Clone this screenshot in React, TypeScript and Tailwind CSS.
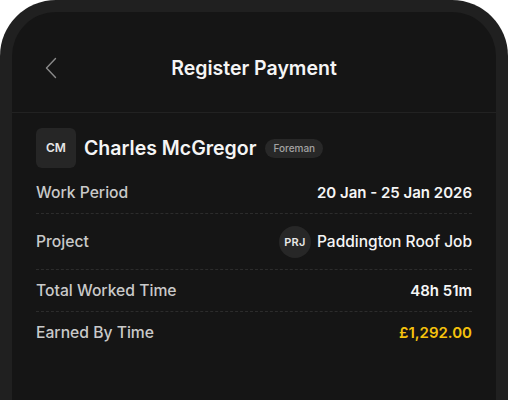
import React from 'react';

interface Row {
  label: string;
  value: React.ReactNode;
  last?: boolean;
}

function BackIcon() {
  return (
    <svg width="12" height="22" viewBox="0 0 12 22" fill="none" className="text-[#8a8a8a]">
      <path d="M10.5 1.5 L1.5 11 L10.5 20.5" stroke="currentColor" strokeWidth="1.4" strokeLinecap="round" strokeLinejoin="round" />
    </svg>
  );
}

export default function App() {
  const rows: Row[] = [
    {
      label: 'Work Period',
      value: <span className="font-semibold text-[#f5f5f5]">20 Jan - 25 Jan 2026</span>,
    },
    {
      label: 'Project',
      value: (
        <div className="flex items-center gap-1.5">
          <div className="flex h-8 w-8 items-center justify-center rounded-full bg-[#272727] text-[11px] font-semibold tracking-wide text-[#e6e6e6]">
            PRJ
          </div>
          <span className="text-[15.5px] font-medium text-[#f5f5f5]">Paddington Roof Job</span>
        </div>
      ),
    },
    {
      label: 'Total Worked Time',
      value: <span className="font-semibold text-[#f5f5f5]">48h 51m</span>,
    },
    {
      label: 'Earned By Time',
      value: <span className="font-semibold text-[#f4c20d]">£1,292.00</span>,
      last: true,
    },
  ];

  return (
    <div
      className="h-[400px] w-[508px] overflow-hidden bg-white"
      style={{ fontFamily: 'Inter, "Noto Sans", sans-serif' }}
    >
      <div className="h-[460px] rounded-t-[56px] bg-[#202020] px-3 pt-3">
        <div className="h-full rounded-t-[44px] bg-[#151515]">
          {/* Header */}
          <div className="relative flex h-[101px] items-start justify-center border-b border-[#222222] pt-[44px]">
            <div className="absolute left-[33px] top-[45px]">
              <BackIcon />
            </div>
            <h1 className="text-[19.5px] font-semibold leading-6 text-[#f5f5f5]">Register Payment</h1>
          </div>

          {/* Content */}
          <div className="px-6 pt-[15px]">
            <div className="mb-1 flex items-center">
              <div className="flex h-10 w-10 items-center justify-center rounded-md bg-[#262626] text-[12px] font-semibold text-[#e6e6e6]">
                CM
              </div>
              <span className="ml-2 text-[19.5px] font-semibold leading-7 text-[#f5f5f5]">Charles McGregor</span>
              <span className="ml-[9px] rounded-full bg-[#282828] px-2 py-[3px] text-[10px] font-medium leading-[13px] text-[#a3a3a3]">
                Foreman
              </span>
            </div>

            {rows.map((row) => (
              <div
                key={row.label}
                className={`flex items-center justify-between pt-3 pb-[11px] text-[15px] leading-[18px] ${
                  row.last ? '' : 'border-b border-dashed border-[#2c2c2c]'
                }`}
              >
                <span className="text-[15.7px] font-medium text-[#c9c9c9]">{row.label}</span>
                {row.value}
              </div>
            ))}
          </div>
        </div>
      </div>
    </div>
  );
}
